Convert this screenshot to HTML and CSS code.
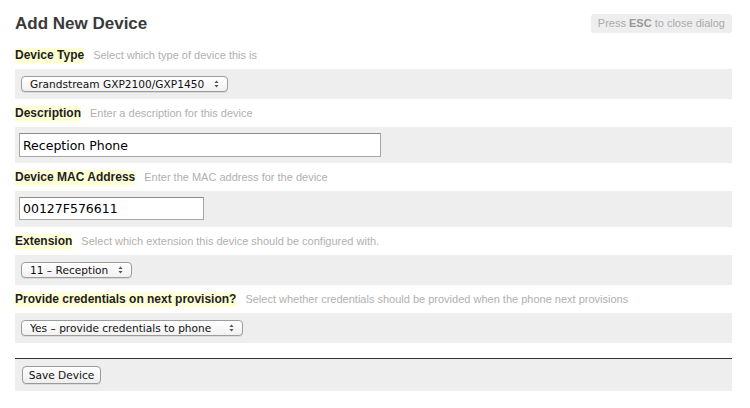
FILE: index.html
```html
<!DOCTYPE html>
<html>
<head>
<meta charset="utf-8">
<link rel="stylesheet" href="styles.css">
</head>
<body>
<div class="dialog">
  <div class="header">
    <h1 class="title">Add New Device</h1>
    <div class="esc">Press <b>ESC</b> to close dialog</div>
  </div>

  <div class="label-row"><span class="label">Device Type</span><span class="hint">Select which type of device this is</span></div>
  <div class="band band-select">
    <select class="sel sel-type"><option>Grandstream GXP2100/GXP1450</option></select>
  </div>

  <div class="label-row"><span class="label">Description</span><span class="hint">Enter a description for this device</span></div>
  <div class="band band-input">
    <input class="txt txt-desc" type="text" value="Reception Phone">
  </div>

  <div class="label-row"><span class="label">Device MAC Address</span><span class="hint">Enter the MAC address for the device</span></div>
  <div class="band band-input band-mac">
    <input class="txt txt-mac" type="text" value="00127F576611">
  </div>

  <div class="label-row"><span class="label">Extension</span><span class="hint">Select which extension this device should be configured with.</span></div>
  <div class="band band-select">
    <select class="sel sel-ext"><option>11 – Reception</option></select>
  </div>

  <div class="label-row"><span class="label">Provide credentials on next provision?</span><span class="hint">Select whether credentials should be provided when the phone next provisions</span></div>
  <div class="band band-select">
    <select class="sel sel-cred"><option>Yes – provide credentials to phone</option></select>
  </div>

  <div class="rule"></div>
  <div class="band band-actions">
    <button class="btn" type="button">Save Device</button>
  </div>
</div>
</body>
</html>
```

FILE: styles.css
```css
html, body {
  margin: 0;
  padding: 0;
  background: #fff;
}

body {
  font-family: "Liberation Sans", Arial, Helvetica, sans-serif;
  color: #222;
}

.dialog {
  padding: 14px 18px 0 15px;
}

.header {
  display: flex;
  justify-content: space-between;
  align-items: flex-start;
  height: 27px;
}

.title {
  margin: 0;
  font-size: 17px;
  line-height: 20px;
  font-weight: bold;
  color: #3a3a3a;
}

.esc {
  background: #eeeeee;
  color: #aaaaaa;
  font-size: 11px;
  line-height: 19px;
  padding: 0 7px;
  border-radius: 3px;
}

.esc b {
  color: #999999;
}

.label-row {
  display: flex;
  align-items: baseline;
  gap: 9px;
  padding: 7px 0 6px;
  line-height: 15px;
  white-space: nowrap;
}

.label {
  font-size: 12px;
  font-weight: bold;
  color: #1e1e1e;
  background: #ffffd6;
}

.hint {
  font-size: 11px;
  color: #b0b0b0;
}

.band {
  background: #eeeeee;
  display: flex;
  align-items: center;
}

.band-select {
  padding: 7px 6px;
}

.band-input {
  padding: 6px 4px;
}

.band-mac {
  padding-bottom: 7px;
}

.band-actions {
  padding: 7px;
}

.sel {
  -webkit-appearance: none;
  appearance: none;
  box-sizing: border-box;
  height: 16px;
  margin: 0;
  padding: 0 18px 0 8px;
  border: 1px solid #9c9c9c;
  border-radius: 4px;
  background-color: #fafafa;
  background-image:
    url("data:image/svg+xml;utf8,<svg xmlns='http://www.w3.org/2000/svg' width='5' height='8' viewBox='0 0 5 8'><path d='M2.5 0.5 L4.6 3 L0.4 3 Z M2.5 7.5 L4.6 5 L0.4 5 Z' fill='%23555'/></svg>"),
    linear-gradient(#ffffff, #f1f1f1);
  background-repeat: no-repeat, no-repeat;
  background-position: right 8px center, 0 0;
  box-shadow: 0 1px 0 rgba(0, 0, 0, 0.08);
  font-family: "DejaVu Sans", Verdana, sans-serif;
  font-size: 10.6px;
  line-height: 14px;
  color: #111;
}

.sel-type { width: 207px; }
.sel-ext { width: 111px; }
.sel-cred { width: 222px; }

.txt {
  box-sizing: border-box;
  margin: 0;
  padding: 0 3px;
  border: 1px solid #a6a6a6;
  border-top-color: #8c8c8c;
  border-radius: 0;
  background: #fff;
  font-family: "DejaVu Sans", Verdana, sans-serif;
  font-size: 12.5px;
  color: #000;
  outline: none;
}

.txt-desc {
  width: 362px;
  height: 24px;
}

.txt-mac {
  width: 185px;
  height: 23px;
}

.rule {
  margin-top: 15px;
  height: 1px;
  background: #333333;
}

.btn {
  -webkit-appearance: none;
  appearance: none;
  box-sizing: border-box;
  width: 79px;
  height: 18px;
  margin: 0;
  padding: 0;
  border: 1px solid #9a9a9a;
  border-radius: 4px;
  background: linear-gradient(#ffffff, #eeeeee);
  box-shadow: 0 1px 0 rgba(0, 0, 0, 0.08);
  font-family: "DejaVu Sans", Verdana, sans-serif;
  font-size: 10.6px;
  line-height: 16px;
  color: #111;
}
```
